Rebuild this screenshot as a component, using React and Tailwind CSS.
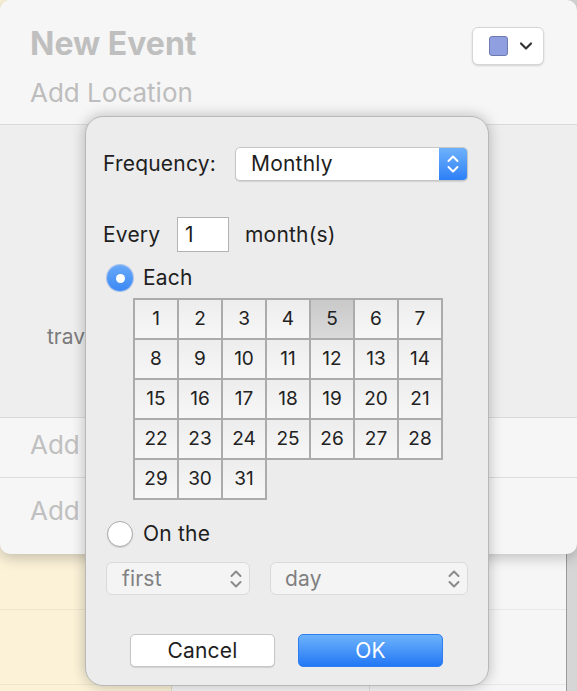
import React from "react";

const font = { fontFamily: "Inter, 'Noto Sans', sans-serif" };

function Stepper({ color = "white", className = "" }) {
  return (
    <svg width="14" height="24" viewBox="0 0 14 24" className={className} fill="none" stroke={color} strokeWidth="2" strokeLinecap="round" strokeLinejoin="round">
      <path d="M2.5 9 L7 4.5 L11.5 9" />
      <path d="M2.5 15 L7 19.5 L11.5 15" />
    </svg>
  );
}

function DayGrid() {
  const days = Array.from({ length: 31 }, (_, i) => i + 1);
  return (
    <div className="ml-[30px] mt-[7px] grid w-[310px] grid-cols-[repeat(7,44px)] auto-rows-[40px] pl-[2px] pt-[2px] text-[19px] tracking-normal">
      {days.map((d) => (
        <div
          key={d}
          className={
            "-ml-[2px] -mt-[2px] flex items-center justify-center border-2 border-[#ababab] text-[#222] " +
            (d === 5
              ? "bg-gradient-to-b from-[#c9c9c9] to-[#dadada]"
              : "bg-gradient-to-b from-[#ededed] to-[#f7f7f7]")
          }
        >
          {d}
        </div>
      ))}
    </div>
  );
}

export default function App() {
  return (
    <div className="relative h-[691px] w-[577px] overflow-hidden bg-[#d9d9d9]" style={font}>
      {/* calendar behind */}
      <div className="flex h-full">
        <div className="w-[172px] border-r border-[#e3dcc6] bg-[#fbf2d8]">
          <div className="h-[610px] border-b border-[#efe6cc]" />
          <div className="h-[75px] border-b border-[#efe6cc]" />
        </div>
        <div className="w-[198px] border-r border-[#dedede] bg-[#f6f6f6]">
          <div className="h-[610px] border-b border-[#e8e8e8]" />
          <div className="h-[75px] border-b border-[#e8e8e8]" />
        </div>
        <div className="w-[197px] border-r border-[#9a9a9a] bg-[#f6f6f6]">
          <div className="h-[610px] border-b border-[#e8e8e8]" />
          <div className="h-[75px] border-b border-[#e8e8e8]" />
        </div>
        <div className="flex-1 bg-[#d6d6d6]" />
      </div>

      {/* event window */}
      <div className="absolute left-0 top-0 flex h-[554px] w-[577px] flex-col overflow-hidden rounded-[10px] bg-[#f6f6f6] shadow-[0_4px_14px_rgba(0,0,0,0.22)]">
        <div className="relative h-[125px] border-b border-[#d9d9d9] px-[30px] pt-[28px]">
          <div className="text-[32px] font-bold leading-[32px] text-[#bfbfbf]">New Event</div>
          <div className="mt-[20px] text-[26px] leading-[26px] text-[#bdbdbd]">Add Location</div>
          <div className="absolute right-[33px] top-[27px] flex h-[38px] w-[72px] items-center gap-[11px] rounded-[6px] border border-[#d6d6d6] bg-white pl-[16px] shadow-[0_1px_2px_rgba(0,0,0,0.15)]">
            <div className="h-[20px] w-[19px] rounded-[3px] border border-[#6f7bb0] bg-[#8f9fe0]" />
            <svg width="14" height="10" viewBox="0 0 14 10" fill="none" stroke="#333" strokeWidth="2.2" strokeLinecap="round" strokeLinejoin="round">
              <path d="M2 2.5 L7 7.5 L12 2.5" />
            </svg>
          </div>
        </div>
        <div className="h-[293px] border-b border-[#d9d9d9] bg-[#eeeeee] pl-[47px] pt-[202px]">
          <div className="w-[40px] overflow-hidden whitespace-nowrap text-[21px] leading-[20px] text-[#7b7b7b]">travel time:</div>
        </div>
        <div className="h-[60px] border-b border-[#dcdcdc] pl-[30px] pt-[14px]">
          <div className="w-[55px] overflow-hidden whitespace-nowrap text-[26px] leading-[26px] text-[#c0c0c0]">Add Invitees</div>
        </div>
        <div className="flex-1 pl-[30px] pt-[20px]">
          <div className="w-[55px] overflow-hidden whitespace-nowrap text-[26px] leading-[26px] text-[#c0c0c0]">Add Notes</div>
        </div>
      </div>

      {/* repeat popover */}
      <div className="absolute left-[85px] top-[116px] flex h-[570px] w-[404px] flex-col rounded-[18px] border border-[#b8b8b8] bg-[#ececec] px-[17px] pt-[30px] text-[21px] tracking-[0.2px] text-[#1e1e1e] shadow-[0_0_14px_rgba(0,0,0,0.25)]">
        <div className="flex h-[34px] items-center">
          <span className="w-[132px]">Frequency:</span>
          <div className="flex h-[34px] w-[233px] items-center overflow-hidden rounded-[5px] border border-[#c6c6c6] bg-white shadow-[0_1px_1px_rgba(0,0,0,0.12)]">
            <span className="flex-1 pl-[15px]">Monthly</span>
            <div className="flex h-full w-[28px] items-center justify-center bg-gradient-to-b from-[#6eb1fb] to-[#2c7ff6]">
              <Stepper />
            </div>
          </div>
        </div>

        <div className="mt-[36px] flex h-[35px] items-center">
          <span className="w-[74px]">Every</span>
          <div className="flex h-[35px] w-[52px] items-center border border-[#b3b3b3] bg-white pl-[7px]">1</div>
          <span className="ml-[16px]">month(s)</span>
        </div>

        <div className="mt-[13px] flex h-[26px] items-center">
          <div className="ml-[4px] flex h-[26px] w-[26px] items-center justify-center rounded-full bg-gradient-to-b from-[#67a9f8] to-[#3c88f4] shadow-[0_0_0_1px_rgba(40,110,230,0.35)]">
            <div className="h-[9px] w-[9px] rounded-full bg-white" />
          </div>
          <span className="ml-[10px]">Each</span>
        </div>

        <DayGrid />

        <div className="mt-[21px] flex h-[26px] items-center">
          <div className="ml-[4px] h-[26px] w-[26px] rounded-full border border-[#a9a9a9] bg-white shadow-[0_1px_1px_rgba(0,0,0,0.1)]" />
          <span className="ml-[10px]">On the</span>
        </div>

        <div className="mt-[15px] flex h-[33px] gap-[20px] pl-[3px] text-[#808080]">
          <div className="flex w-[144px] items-center rounded-[6px] border border-[#dadada] bg-[#f4f4f4] pl-[15px] pr-[6px]">
            <span className="flex-1">first</span>
            <Stepper color="#8a8a8a" />
          </div>
          <div className="flex w-[198px] items-center rounded-[6px] border border-[#dadada] bg-[#f4f4f4] pl-[14px] pr-[6px]">
            <span className="flex-1">day</span>
            <Stepper color="#8a8a8a" />
          </div>
        </div>

        <div className="mt-[39px] flex h-[33px] gap-[23px] pl-[27px]">
          <div className="flex w-[145px] items-center justify-center rounded-[5px] border border-[#c6c6c6] bg-white shadow-[0_1px_1px_rgba(0,0,0,0.12)]">
            Cancel
          </div>
          <div className="flex w-[145px] items-center justify-center rounded-[5px] border border-[#2f7df0] bg-gradient-to-b from-[#6cb2fb] to-[#2177f5] text-white">
            OK
          </div>
        </div>
      </div>
    </div>
  );
}
